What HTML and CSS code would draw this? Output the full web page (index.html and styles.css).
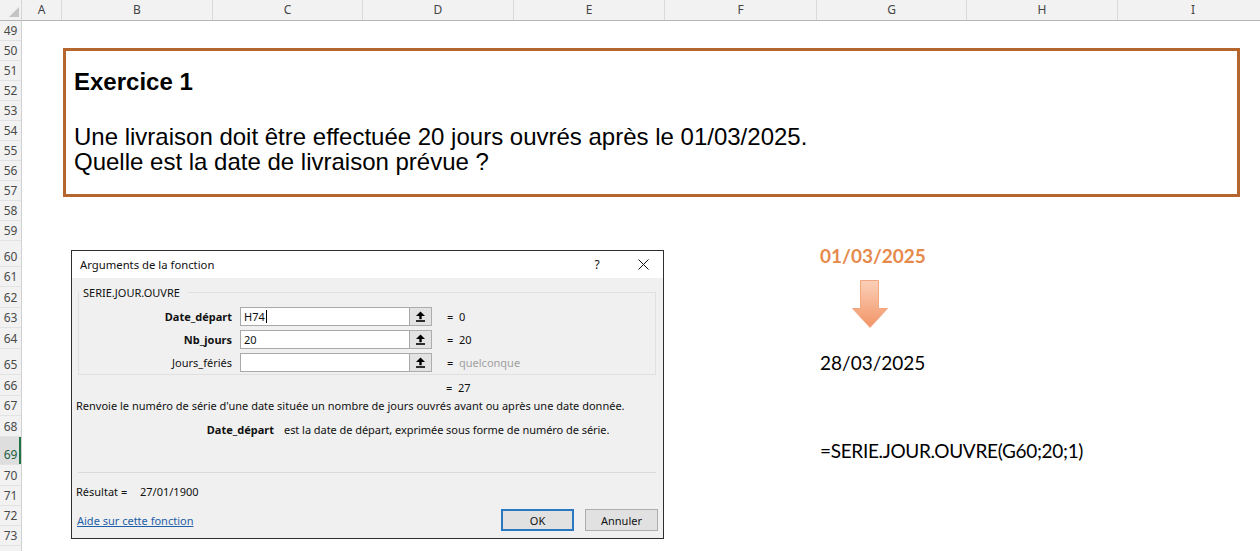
FILE: index.html
```html
<!DOCTYPE html>
<html lang="fr">
<head>
<meta charset="utf-8">
<title>Exercice 1 - SERIE.JOUR.OUVRE</title>
<link rel="stylesheet" href="styles.css">
</head>
<body>
<div class="sheet">
  <div class="corner">
    <svg class="corner-tri" width="10" height="10" viewBox="0 0 10 10"><polygon points="10,0 10,10 0,10" fill="#c4c4c4"/></svg>
  </div>
  <div class="colheads">
    <div class="ch">A</div><div class="ch">B</div><div class="ch">C</div><div class="ch">D</div><div class="ch">E</div><div class="ch">F</div><div class="ch">G</div><div class="ch">H</div><div class="ch">I</div>
  </div>
  <div class="rowheads">
    <div class="rh">49</div><div class="rh">50</div><div class="rh">51</div><div class="rh">52</div><div class="rh">53</div><div class="rh">54</div><div class="rh">55</div><div class="rh">56</div><div class="rh">57</div><div class="rh">58</div><div class="rh">59</div><div class="rh">60</div><div class="rh">61</div><div class="rh">62</div><div class="rh">63</div><div class="rh">64</div><div class="rh">65</div><div class="rh">66</div><div class="rh">67</div><div class="rh">68</div><div class="rh rh-sel">69</div><div class="rh">70</div><div class="rh">71</div><div class="rh">72</div><div class="rh">73</div><div class="rh"></div>
  </div>
  <div class="cells">
    <div class="exo">
      <div class="exo-title">Exercice 1</div>
      <p class="exo-text">Une livraison doit être effectuée 20 jours ouvrés après le 01/03/2025.<br>Quelle est la date de livraison prévue ?</p>
    </div>

    <div class="dlg">
      <div class="dlg-title">
        <span class="dlg-title-text">Arguments de la fonction</span>
        <span class="dlg-help">?</span>
        <span class="dlg-close"><svg width="11" height="11" viewBox="0 0 11 11"><path d="M0.5 0.5 L10.5 10.5 M10.5 0.5 L0.5 10.5" stroke="#111" stroke-width="1"/></svg></span>
      </div>
      <div class="dlg-body">
        <fieldset class="grp">
          <legend class="grp-legend">SERIE.JOUR.OUVRE</legend>
          <div class="args">
            <div class="arg-label bold">Date_départ</div>
            <div class="arg-input">H74<span class="caret"></span></div>
            <div class="arg-ref"><svg width="9" height="11" viewBox="0 0 9 11"><polygon points="0,5 4.5,0.5 9,5" fill="#000"/><rect x="3.3" y="4" width="2.4" height="4.2" fill="#000"/><rect x="0" y="9.2" width="9" height="1.6" fill="#000"/></svg></div>
            <div class="arg-eq"><span class="eq">=</span>0</div>

            <div class="arg-label bold">Nb_jours</div>
            <div class="arg-input">20</div>
            <div class="arg-ref"><svg width="9" height="11" viewBox="0 0 9 11"><polygon points="0,5 4.5,0.5 9,5" fill="#000"/><rect x="3.3" y="4" width="2.4" height="4.2" fill="#000"/><rect x="0" y="9.2" width="9" height="1.6" fill="#000"/></svg></div>
            <div class="arg-eq"><span class="eq">=</span>20</div>

            <div class="arg-label">Jours_fériés</div>
            <div class="arg-input"></div>
            <div class="arg-ref"><svg width="9" height="11" viewBox="0 0 9 11"><polygon points="0,5 4.5,0.5 9,5" fill="#000"/><rect x="3.3" y="4" width="2.4" height="4.2" fill="#000"/><rect x="0" y="9.2" width="9" height="1.6" fill="#000"/></svg></div>
            <div class="arg-eq"><span class="eq">=</span><span class="muted">quelconque</span></div>
          </div>
        </fieldset>
        <div class="res-line"><span class="eq">=</span>27</div>
        <div class="desc">Renvoie le numéro de série d'une date située un nombre de jours ouvrés avant ou après une date donnée.</div>
        <div class="arg-desc"><span class="arg-desc-label">Date_départ</span><span class="arg-desc-text">est la date de départ, exprimée sous forme de numéro de série.</span></div>
        <div class="sep"></div>
        <div class="result"><span class="result-label">Résultat =</span>27/01/1900</div>
        <div class="dlg-foot">
          <span class="help-link">Aide sur cette fonction</span>
          <span class="btn btn-ok">OK</span>
          <span class="btn">Annuler</span>
        </div>
      </div>
    </div>

    <div class="cell g60 orange">01/03/2025</div>
    <div class="arrow">
      <svg width="36" height="48" viewBox="0 0 36 48">
        <defs>
          <linearGradient id="ag" x1="0" y1="0" x2="0" y2="1">
            <stop offset="0" stop-color="#fbd0b8"/>
            <stop offset="1" stop-color="#f29466"/>
          </linearGradient>
        </defs>
        <polygon points="8.5,0.5 26.5,0.5 26.5,28.5 35.5,28.5 18,47.5 0.5,28.5 8.5,28.5" fill="url(#ag)" stroke="#f2a783" stroke-width="1"/>
      </svg>
    </div>
    <div class="cell g65">28/03/2025</div>
    <div class="cell g69">=SERIE.JOUR.OUVRE(G60;20;1)</div>
  </div>
</div>
</body>
</html>
```
FILE: styles.css
```css
html, body {
  margin: 0;
  padding: 0;
  background: #ffffff;
}

.sheet {
  width: 1260px;
  height: 551px;
  overflow: hidden;
  display: grid;
  grid-template-columns: 22px 1238px;
  grid-template-rows: 21px 530px;
  font-family: "Noto Sans", sans-serif;
}

.corner {
  background: #f2f2f2;
  border-bottom: 1px solid #b6b6b6;
  border-right: 1px solid #d4d4d4;
  box-sizing: border-box;
  display: flex;
  align-items: flex-end;
  justify-content: flex-end;
  padding: 0 2px 3px 0;
}

.colheads {
  display: grid;
  grid-template-columns: 40px 151px 150px 151px 151px 152px 150px 151px 151px;
  background: #f2f2f2;
  border-bottom: 1px solid #b6b6b6;
  box-sizing: border-box;
}

.ch {
  display: flex;
  align-items: center;
  justify-content: center;
  font-size: 12px;
  color: #444;
  border-right: 1px solid #dadada;
  padding-bottom: 1px;
}

.rowheads,
.cells {
  display: grid;
  grid-template-rows: repeat(11, 20px) 26px 20px 21px 20px 21px 26px 21px 20px 21px 28px 21px 20px 20px 20px 20px;
}

.rowheads {
  background: #f2f2f2;
  border-right: 1px solid #d0d0d0;
  box-sizing: border-box;
}

.rh {
  display: flex;
  align-items: flex-end;
  justify-content: center;
  font-size: 12px;
  line-height: 14px;
  color: #4a4a4a;
  border-bottom: 1px solid #e2e2e2;
  box-sizing: border-box;
  padding-bottom: 2px;
}

.rh-sel {
  background: #dedede;
  color: #22603f;
  box-shadow: inset -2px 0 0 #217346;
}

.cells {
  grid-template-columns: 40px 151px 150px 151px 151px 152px 150px 151px 151px;
  background: #ffffff;
}

/* Exercise text box */
.exo {
  grid-column: 2 / 10;
  grid-row: 2 / 10;
  align-self: start;
  justify-self: start;
  margin: 7px 0 0 1px;
  width: 1177px;
  height: 149px;
  box-sizing: border-box;
  border: 3px solid #b4662e;
  padding: 17px 0 0 8px;
  font-family: "Liberation Sans", Arial, sans-serif;
  color: #000;
}

.exo-title {
  font-size: 24px;
  font-weight: bold;
  line-height: 27px;
}

.exo-text {
  margin: 29px 0 0 0;
  font-size: 24px;
  line-height: 25px;
}

/* Dialog */
.dlg {
  grid-column: 2 / 7;
  grid-row: 12 / 27;
  align-self: start;
  justify-self: start;
  margin: 9px 0 0 9px;
  width: 593px;
  height: 289px;
  box-sizing: border-box;
  border: 1px solid #2e2e2e;
  background: #f0f0f0;
  display: flex;
  flex-direction: column;
  font-family: "Noto Sans", sans-serif;
  font-size: 11px;
  color: #111;
}

.dlg-title {
  height: 27px;
  background: #ffffff;
  display: flex;
  align-items: center;
  padding-left: 8px;
  font-size: 11.3px;
}

.dlg-title-text {
  flex: 1;
}

.dlg-help {
  width: 52px;
  text-align: center;
  font-size: 12px;
}

.dlg-close {
  width: 40px;
  display: flex;
  justify-content: center;
}

.dlg-body {
  flex: 1;
  display: flex;
  flex-direction: column;
}

.grp {
  margin: 7px 0 0 6px;
  width: 578px;
  box-sizing: border-box;
  border: 1px solid #e0e0e0;
  padding: 7px 0 2px 0;
}

.grp-legend {
  padding: 0 8px 0 4px;
  line-height: 15px;
}

.args {
  display: grid;
  grid-template-columns: 161px 170px 22px auto;
  grid-auto-rows: 19px;
  row-gap: 4px;
}

.arg-label {
  text-align: right;
  padding-right: 8px;
  line-height: 19px;
}

.bold {
  font-weight: bold;
}

.arg-input {
  background: #ffffff;
  border: 1px solid #a9a9a9;
  box-sizing: border-box;
  padding-left: 3px;
  line-height: 17px;
  display: flex;
  align-items: center;
}

.caret {
  display: inline-block;
  width: 1px;
  height: 13px;
  background: #000;
  margin-left: 1px;
}

.arg-ref {
  background: #e3e3e3;
  border: 1px solid #adadad;
  border-left: none;
  box-sizing: border-box;
  display: flex;
  align-items: center;
  justify-content: center;
}

.arg-eq {
  padding-left: 15px;
  line-height: 19px;
}

.eq {
  display: inline-block;
  width: 12px;
}

.muted {
  color: #a0a0a0;
}

.res-line {
  margin-top: 5px;
  padding-left: 374px;
  line-height: 15px;
}

.desc {
  margin-top: 3px;
  padding-left: 4px;
  line-height: 15px;
  white-space: nowrap;
}

.arg-desc {
  margin-top: 9px;
  display: flex;
  line-height: 15px;
}

.arg-desc-label {
  width: 202px;
  text-align: right;
  font-weight: bold;
  flex: none;
}

.arg-desc-text {
  margin-left: 10px;
  white-space: nowrap;
  letter-spacing: -0.05px;
}

.sep {
  margin: 35px 0 0 6px;
  width: 578px;
  height: 1px;
  background: #dadada;
}

.result {
  margin-top: 11px;
  padding-left: 4px;
  line-height: 15px;
}

.result-label {
  display: inline-block;
  width: 64px;
}

.dlg-foot {
  margin-top: 10px;
  height: 22px;
  display: flex;
  align-items: center;
  padding: 0 5px 0 5px;
}

.help-link {
  color: #1e5fa8;
  text-decoration: underline;
  margin-right: auto;
}

.btn {
  width: 73px;
  height: 22px;
  box-sizing: border-box;
  border: 1px solid #adadad;
  background: #e1e1e1;
  display: flex;
  align-items: center;
  justify-content: center;
  margin-left: 11px;
}

.btn-ok {
  border: 2px solid #2a78c2;
}

/* Cells in column G */
.cell {
  grid-column: 7;
  align-self: end;
  padding-left: 3px;
  font-family: Lato, "Noto Sans", sans-serif;
  font-size: 19px;
  line-height: 22px;
  white-space: nowrap;
  color: #000;
}

.g60 {
  grid-row: 12;
}

.orange {
  color: #e68a4c;
  font-weight: bold;
}

.g65 {
  grid-row: 17;
  padding-bottom: 1px;
}

.g69 {
  grid-row: 21;
  padding-bottom: 3px;
  letter-spacing: -0.32px;
}

.arrow {
  grid-column: 7;
  grid-row: 13 / 17;
  align-self: start;
  justify-self: start;
  margin: 13px 0 0 35px;
  width: 36px;
  height: 48px;
}

.arrow svg {
  display: block;
}
```
